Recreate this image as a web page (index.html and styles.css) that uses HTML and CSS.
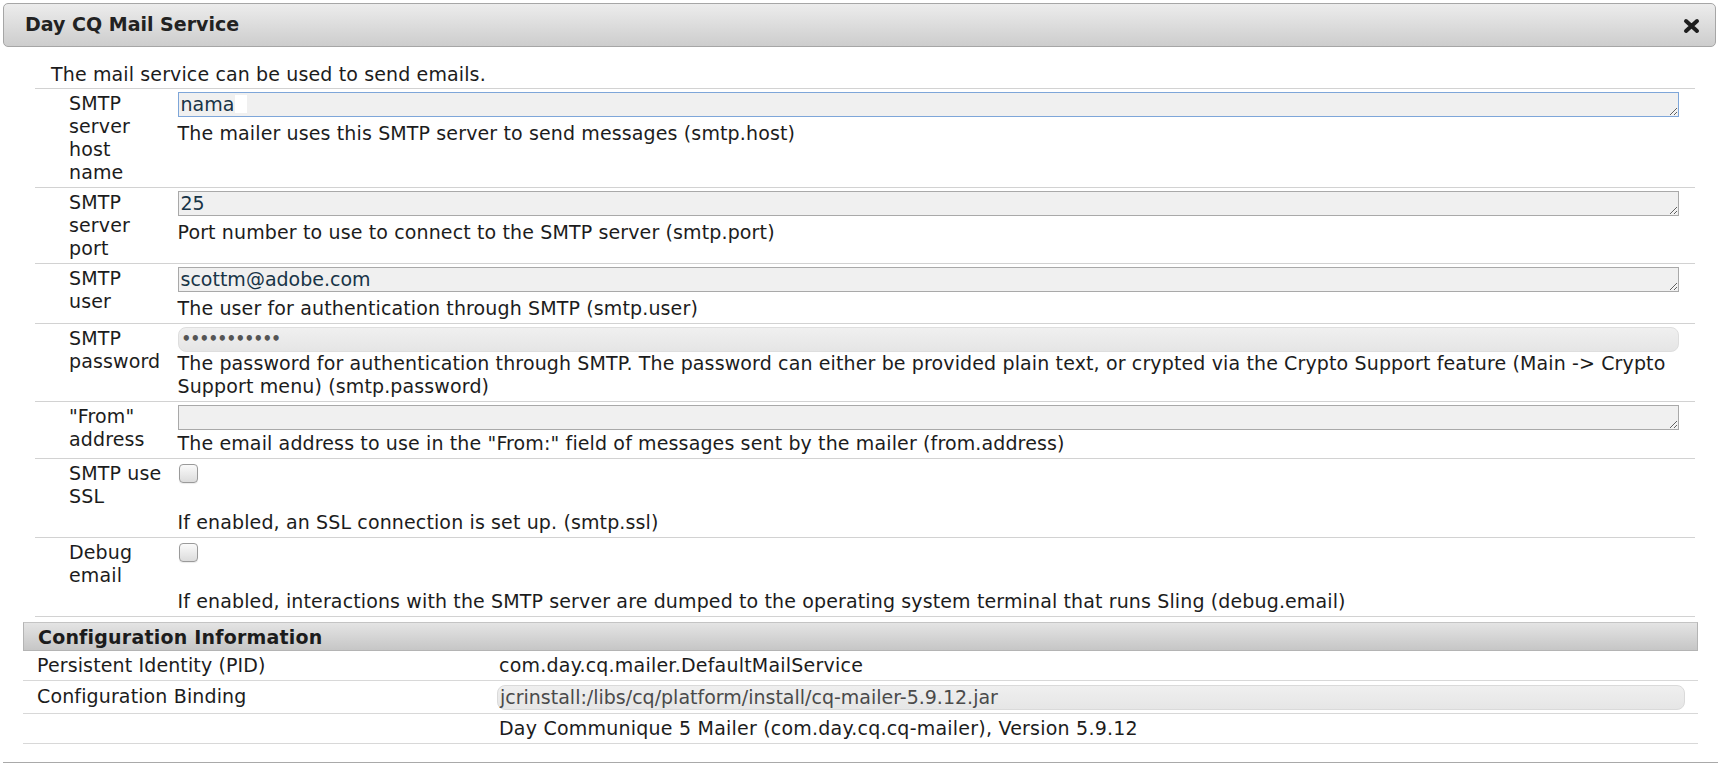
FILE: index.html
```html
<!DOCTYPE html>
<html>
<head>
<meta charset="utf-8">
<title>Day CQ Mail Service</title>
<link rel="stylesheet" href="styles.css">
</head>
<body>
<div class="titlebar">
  <span class="title">Day CQ Mail Service</span>
  <svg class="close" viewBox="0 0 17 16" width="17" height="16">
    <path d="M3 3 L14 13 M14 3 L3 13" stroke="#1e1e1e" stroke-width="4" stroke-linecap="round" fill="none"/>
  </svg>
</div>
<div class="content">
  <div class="form">
    <div class="intro">The mail service can be used to send emails.</div>
    <div class="row">
      <div class="label">SMTP server host name</div>
      <div class="value">
        <div class="fieldwrap">
          <textarea class="field focused" rows="1">nama</textarea>
          <span class="glare"></span>
        </div>
        <div class="desc">The mailer uses this SMTP server to send messages (smtp.host)</div>
      </div>
    </div>
    <div class="row">
      <div class="label">SMTP server port</div>
      <div class="value">
        <textarea class="field" rows="1">25</textarea>
        <div class="desc">Port number to use to connect to the SMTP server (smtp.port)</div>
      </div>
    </div>
    <div class="row">
      <div class="label">SMTP user</div>
      <div class="value">
        <textarea class="field" rows="1">scottm@adobe.com</textarea>
        <div class="desc">The user for authentication through SMTP (smtp.user)</div>
      </div>
    </div>
    <div class="row">
      <div class="label">SMTP password</div>
      <div class="value">
        <input class="password" type="password" value="xxxxxxxxxxx">
        <div class="desc">The password for authentication through SMTP. The password can either be provided plain text, or crypted via the Crypto Support feature (Main -&gt; Crypto Support menu) (smtp.password)</div>
      </div>
    </div>
    <div class="row">
      <div class="label">"From" address</div>
      <div class="value">
        <textarea class="field empty" rows="1"></textarea>
        <div class="desc">The email address to use in the "From:" field of messages sent by the mailer (from.address)</div>
      </div>
    </div>
    <div class="row">
      <div class="label">SMTP use SSL</div>
      <div class="value">
        <input class="check" type="checkbox">
        <div class="desc">If enabled, an SSL connection is set up. (smtp.ssl)</div>
      </div>
    </div>
    <div class="row last">
      <div class="label">Debug email</div>
      <div class="value">
        <input class="check" type="checkbox">
        <div class="desc">If enabled, interactions with the SMTP server are dumped to the operating system terminal that runs Sling (debug.email)</div>
      </div>
    </div>
  </div>
  <div class="config">
    <div class="config-head">Configuration Information</div>
    <div class="crow">
      <div class="clabel">Persistent Identity (PID)</div>
      <div class="cvalue">com.day.cq.mailer.DefaultMailService</div>
    </div>
    <div class="crow binding">
      <div class="clabel">Configuration Binding</div>
      <div class="cvalue"><div class="bindbox">jcrinstall:/libs/cq/platform/install/cq-mailer-5.9.12.jar</div></div>
    </div>
    <div class="crow">
      <div class="clabel"></div>
      <div class="cvalue">Day Communique 5 Mailer (com.day.cq.cq-mailer), Version 5.9.12</div>
    </div>
  </div>
</div>
<div class="footer-line"></div>
</body>
</html>
```

FILE: styles.css
```css
html, body {
  margin: 0;
  padding: 0;
  background: #ffffff;
}
body {
  font-family: "DejaVu Sans", Verdana, sans-serif;
  font-size: 19px;
  line-height: 23px;
  color: #1c1c1c;
  width: 1718px;
  letter-spacing: 0.13px;
}
.titlebar {
  margin: 3px 2px 0 3px;
  height: 42px;
  border: 1px solid #a6a6a6;
  border-radius: 5px;
  background: linear-gradient(#ececec, #cdcdcd);
  display: flex;
  align-items: center;
  justify-content: space-between;
  padding: 0 15px 0 21px;
}
.title {
  font-weight: bold;
  color: #222;
  margin-top: -1px;
  letter-spacing: 0;
}
.close {
  display: block;
  margin-top: 2px;
}
.content {
  padding: 0 20px 0 23px;
}
.form {
  margin: 0 3px 0 12px;
}
.intro {
  padding: 16px 0 0 16px;
  margin-bottom: 2px;
}
.row {
  display: grid;
  grid-template-columns: 129px 1fr;
  border-top: 1px solid #d2d2d2;
}
.row.last {
  border-bottom: 1px solid #d2d2d2;
}
.label {
  padding: 3px 0 3px 34px;
  width: 95px;
}
.value {
  padding: 3px 16px 3px 13.5px;
  min-width: 0;
}
.fieldwrap {
  position: relative;
}
.field {
  display: block;
  box-sizing: border-box;
  width: 100%;
  height: 25px;
  margin: 0 0 4.5px 0;
  padding: 0 2px;
  font-family: "DejaVu Sans", Verdana, sans-serif;
  font-size: 19px;
  line-height: 23px;
  letter-spacing: 0;
  color: #183447;
  background: #f0f0f0;
  border: 1px solid #a9a9a9;
  border-radius: 0;
  overflow: hidden;
  outline: none;
}
.field.empty {
  margin-bottom: 2.5px;
}
.field.focused {
  border-color: #7ea6d9;
}
.glare {
  position: absolute;
  left: 57px;
  top: 3px;
  width: 12px;
  height: 18px;
  background: #ffffff;
}
.password {
  display: block;
  box-sizing: border-box;
  width: 100%;
  height: 25px;
  margin: 0;
  padding: 0 3px;
  font-family: "DejaVu Sans", Verdana, sans-serif;
  font-size: 15px;
  font-weight: bold;
  letter-spacing: -0.6px;
  color: #555555;
  border: 1px solid #dedede;
  border-radius: 8px;
  background: linear-gradient(#f0f0f0, #e5e5e5);
  outline: none;
}
.check {
  -webkit-appearance: none;
  appearance: none;
  display: block;
  width: 19px;
  height: 19px;
  margin: 2px 0 28px 1px;
  border: 1px solid #9a9a9a;
  border-radius: 4px;
  background: linear-gradient(#fafafa, #dcdcdc);
  box-shadow: 0 1px 1px rgba(0, 0, 0, 0.08);
  box-sizing: border-box;
}
.desc {
  color: #1c1c1c;
}
.config {
  margin-top: 5px;
}
.config-head {
  height: 29px;
  line-height: 28px;
  box-sizing: border-box;
  border: 1px solid #b4b4b4;
  border-top-color: #c4c4c4;
  background: linear-gradient(#e4e4e4, #c6c6c6);
  font-weight: bold;
  padding-left: 14px;
  color: #1c1c1c;
  letter-spacing: 0.2px;
}
.crow {
  display: grid;
  grid-template-columns: 474px 1fr;
  border-bottom: 1px solid #d8d8d8;
  padding: 3px 13px 3px 0;
}
.crow.binding {
  padding: 4px 13px 3px 0;
}
.clabel {
  padding-left: 14px;
  min-height: 23px;
}
.cvalue {
  padding-left: 2px;
  letter-spacing: 0.22px;
}
.crow.binding .cvalue {
  padding-left: 0;
  letter-spacing: 0;
}
.bindbox {
  box-sizing: border-box;
  height: 25px;
  line-height: 23px;
  padding-left: 2px;
  border: 1px solid #dadada;
  border-radius: 8px;
  background: linear-gradient(#efefef, #e6e6e6);
  color: #4a4a4a;
}
.footer-line {
  margin: 18px 0 0 3px;
  border-top: 1px solid #a9a9a9;
}
```
